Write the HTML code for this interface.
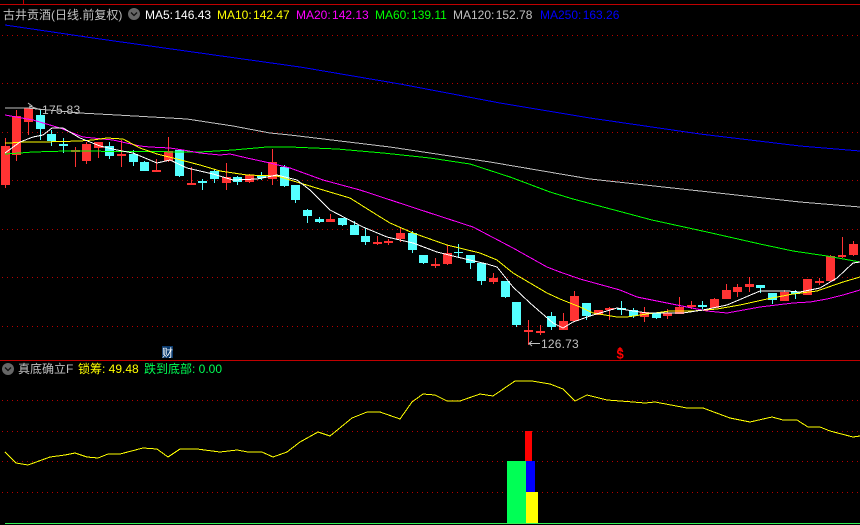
<!DOCTYPE html>
<html lang="zh">
<head>
<meta charset="utf-8">
<title>古井贡酒</title>
<style>
html,body{margin:0;padding:0;background:#000;width:860px;height:525px;overflow:hidden}
svg{display:block}
text{font-family:"Liberation Sans","WenQuanYi Zen Hei","Noto Sans CJK SC",sans-serif;font-size:12px}
.h{word-spacing:-2px}
.l{fill:none;stroke-width:1;shape-rendering:crispEdges}
.r{shape-rendering:crispEdges}
</style>
</head>
<body>
<svg width="860" height="525" viewBox="0 0 860 525" xmlns="http://www.w3.org/2000/svg">
<rect width="860" height="525" fill="#000"/>
<g stroke="#b80000" stroke-dasharray="1 4" class="l">
<path d="M2 35.5H860M2 83.5H860M2 132.5H860M2 180.5H860M2 229.5H860M2 277.5H860M2 326.5H860M2 400.5H860M2 431.5H860M2 461.5H860M2 492.5H860"/>
</g>
<path class="r" fill="#c00000" d="M0 4h860v1H0zM23 0h1v4h-1zM0 360h860v1H0z"/>
<path class="r" fill="#ff3333" d="M1 146h9v39h-9zM5 138h1v50h-1zM12 116h9v39h-9zM16 110h1v51h-1zM24 108h9v14h-9zM28 108h1v27h-1zM71 150h9v2h-9zM75 147h1v20h-1zM82 144h9v17h-9zM86 142h1v22h-1zM94 142h9v6h-9zM98 142h1v16h-1zM117 154h9v2h-9zM121 140h1v27h-1zM152 170h9v2h-9zM156 159h1v13h-1zM164 151h9v10h-9zM168 137h1v25h-1zM187 183h9v2h-9zM191 167h1v18h-1zM222 177h9v6h-9zM226 163h1v27h-1zM245 175h9v7h-9zM249 174h1v9h-1zM268 162h9v17h-9zM272 149h1v36h-1zM326 219h9v3h-9zM330 214h1v8h-1zM373 242h9v2h-9zM377 236h1v9h-1zM384 241h9v2h-9zM388 239h1v6h-1zM396 233h9v6h-9zM400 227h1v15h-1zM431 264h9v2h-9zM435 258h1v10h-1zM443 253h9v11h-9zM447 245h1v20h-1zM489 278h9v4h-9zM493 273h1v11h-1zM524 330h9v2h-9zM528 320h1v25h-1zM536 331h9v2h-9zM540 325h1v10h-1zM559 321h9v9h-9zM563 313h1v17h-1zM570 296h9v25h-9zM574 291h1v30h-1zM594 310h9v5h-9zM605 308h9v2h-9zM609 307h1v13h-1zM640 312h9v5h-9zM644 307h1v15h-1zM663 313h9v3h-9zM667 309h1v10h-1zM675 307h9v7h-9zM679 297h1v17h-1zM687 305h9v2h-9zM691 301h1v8h-1zM710 299h9v9h-9zM714 298h1v10h-1zM722 290h9v9h-9zM726 284h1v15h-1zM733 287h9v5h-9zM737 284h1v13h-1zM745 284h9v3h-9zM749 277h1v15h-1zM780 292h9v9h-9zM784 290h1v11h-1zM803 279h9v16h-9zM815 281h9v2h-9zM819 278h1v7h-1zM826 256h9v25h-9zM830 255h1v27h-1zM838 255h8v2h-8zM842 237h1v21h-1zM849 244h9v11h-9zM853 241h1v15h-1z"/>
<path class="r" fill="#54ffff" d="M36 115h9v14h-9zM40 110h1v30h-1zM47 134h9v7h-9zM51 130h1v16h-1zM59 144h9v2h-9zM63 138h1v15h-1zM105 146h9v10h-9zM109 142h1v17h-1zM129 154h9v8h-9zM133 150h1v16h-1zM140 162h9v9h-9zM144 161h1v10h-1zM175 150h9v26h-9zM179 150h1v27h-1zM198 181h9v2h-9zM202 179h1v11h-1zM210 171h9v8h-9zM214 170h1v13h-1zM233 177h9v5h-9zM237 176h1v9h-1zM257 176h9v2h-9zM261 172h1v8h-1zM280 167h9v19h-9zM284 165h1v22h-1zM291 185h9v15h-9zM295 185h1v18h-1zM303 210h9v6h-9zM307 209h1v14h-1zM315 219h9v3h-9zM319 217h1v6h-1zM338 218h9v7h-9zM342 218h1v8h-1zM350 225h9v10h-9zM354 221h1v14h-1zM361 236h9v6h-9zM365 228h1v17h-1zM408 233h9v17h-9zM412 231h1v22h-1zM419 255h9v8h-9zM423 255h1v9h-1zM454 252h9v1h-9zM458 244h1v14h-1zM466 255h9v8h-9zM470 255h1v14h-1zM477 263h9v18h-9zM481 263h1v22h-1zM501 281h9v16h-9zM505 281h1v17h-1zM512 302h9v23h-9zM516 302h1v25h-1zM547 316h9v11h-9zM551 312h1v18h-1zM582 303h9v13h-9zM586 303h1v17h-1zM617 308h9v2h-9zM621 301h1v14h-1zM629 310h9v6h-9zM633 308h1v10h-1zM652 313h9v5h-9zM656 313h1v6h-1zM698 305h9v2h-9zM702 301h1v8h-1zM756 285h9v3h-9zM760 285h1v8h-1zM768 293h9v7h-9zM772 293h1v11h-1zM791 292h9v2h-9zM795 290h1v9h-1z"/>
<polyline class="l" stroke="#0000ff" points="5,25 100,39 200,53 300,67 400,84 500,103 590,118 700,134 800,146 860,151"/>
<polyline class="l" stroke="#c0c0c0" points="5,108 27,108 80,113 117,115 187,119 233,126 270,133 290,135 390,147 490,162 590,179 700,191 800,202 860,207"/>
<polyline class="l" stroke="#00ff00" points="5,154 20,153 33,152 67,151 200,152 233,150 267,147 290,147 337,149 383,153 430,158 470,164 510,177 550,192 573,199 652,220 707,232 760,244 793,251 827,256 860,262"/>
<polyline class="l" stroke="#ff00ff" points="5,115 33,120 60,128 83,137 113,140 140,146 150,147 170,148 183,150 200,153 210,154 220,155 230,154 247,158 270,163 290,168 323,180 360,190 430,213 473,227 513,248 547,267 560,272 580,279 620,290 637,297 677,305 707,311 727,313 760,307 793,303 810,302 827,299 843,295 860,290"/>
<polyline class="l" stroke="#ffff00" points="5,143 10,143 23,142 43,142 80,141 93,140 107,138 123,139 140,148 157,154 177,159 200,165 220,171 247,175 277,176 300,183 323,190 350,198 377,215 390,223 413,233 447,245 480,253 497,260 513,273 547,293 560,299 580,307 593,313 617,317 627,317 647,314 670,311 693,311 717,309 740,305 767,299 793,294 817,291 843,282 860,277"/>
<polyline class="l" stroke="#ffffff" points="5,153 20,142 33,137 43,135 52,128 63,128 80,138 100,146 117,150 133,153 157,163 170,160 187,168 213,174 233,180 257,179 277,175 297,180 310,190 330,210 363,227 387,237 413,243 437,252 457,257 487,264 497,267 513,287 530,303 553,323 563,328 573,322 593,315 617,308 627,310 647,313 683,313 703,310 727,305 760,291 787,291 800,292 820,288 837,278 853,263 860,262"/>
<polyline class="l" stroke="#ffff00" points="5,452 16,463 28,465 50,457 65,455 75,453 87,457 98,458 108,454 120,454 143,448 157,449 168,457 180,449 197,449 220,452 237,450 248,452 262,452 273,457 287,452 300,442 318,432 330,436 352,418 367,412 380,412 400,419 412,402 423,394 435,395 447,401 460,401 480,394 493,396 515,381 532,381 550,384 563,389 575,401 587,395 607,400 633,402 645,403 655,402 687,408 703,408 730,418 750,422 772,417 783,420 797,420 808,427 820,427 830,431 853,437 860,436"/>
<path class="r" fill="#33ee55" d="M5 523h855v1H5z"/>
<rect class="r" x="507" y="461" width="19" height="62" fill="#00ff55"/>
<rect class="r" x="525" y="431" width="7" height="30" fill="#ff0000"/>
<rect class="r" x="526" y="461" width="9" height="31" fill="#0000ff"/>
<rect class="r" x="526" y="492" width="12" height="31" fill="#ffff00"/>
<text x="3" y="19" fill="#c0c0c0">古井贡酒(日线.前复权)</text>
<circle cx="134" cy="14" r="6" fill="#666"/>
<path d="M131 12.5l3 3 3-3" fill="none" stroke="#111" stroke-width="1.3"/>
<text class="h" x="145" y="19" fill="#ffffff">MA5: 146.43</text>
<text class="h" x="217" y="19" fill="#ffff00">MA10: 142.47</text>
<text class="h" x="296" y="19" fill="#ff00ff">MA20: 142.13</text>
<text class="h" x="375" y="19" fill="#00ff00">MA60: 139.11</text>
<text class="h" x="453" y="19" fill="#c0c0c0">MA120: 152.78</text>
<text class="h" x="540" y="19" fill="#0000ff">MA250: 163.26</text>
<path d="M28 103l4 3-3 2M29 106l12 4" fill="none" stroke="#c0c0c0"/>
<text x="42" y="114" fill="#c0c0c0" style="letter-spacing:.3px">175.83</text>
<path d="M540 343.5H529M532 341l-3 2.500 3 2.500" fill="none" stroke="#c0c0c0"/>
<text x="541" y="348" fill="#c0c0c0" style="letter-spacing:.2px">126.73</text>
<rect x="162" y="346" width="11" height="12" fill="#0a3a6e"/>
<text x="162" y="356.500" fill="#ffffff" style="font-size:11px">财</text>
<path d="M620 347l3 2.500h-6z" fill="#ff0000"/>
<text x="616.500" y="358.500" fill="#ff0000" style="font-size:13px;font-weight:bold">$</text>
<circle cx="8" cy="369" r="6" fill="#666"/>
<path d="M5 367.500l3 3 3-3" fill="none" stroke="#111" stroke-width="1.3"/>
<text x="18" y="373" fill="#c0c0c0">真底确立F</text>
<text x="78" y="373" fill="#ffff00">锁筹: 49.48</text>
<text x="144" y="373" fill="#00ff55">跌到底部: 0.00</text>
</svg>
</body>
</html>
